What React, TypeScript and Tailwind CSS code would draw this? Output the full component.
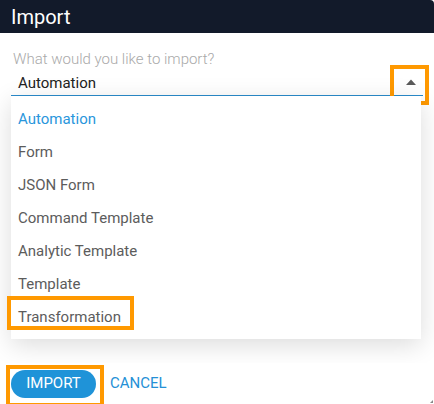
import React from "react";

const options = [
  "Automation",
  "Form",
  "JSON Form",
  "Command Template",
  "Analytic Template",
  "Template",
  "Transformation",
];

export default function App() {
  const selected = "Automation";

  return (
    <div
      className="relative flex h-[404px] w-[434px] flex-col overflow-hidden bg-white"
      style={{ fontFamily: "Roboto, 'Liberation Sans', sans-serif" }}
    >
      {/* Header */}
      <div className="flex h-[33px] shrink-0 items-center rounded-tr-[4px] bg-[#121a2a] px-[11px]">
        <h1 className="text-[20px] leading-none text-white">Import</h1>
      </div>

      {/* Body */}
      <div className="relative flex-1 px-[11px] pt-[16px]">
        <label className="block h-[20px] pl-[2px] text-[15px] leading-[20px] font-light text-[#a9a9a9]">
          What would you like to import?
        </label>

        <div className="relative flex h-[27px] items-center justify-between border-b border-[#2a8bcb] pt-[2px] pl-[7px] pr-[7px]">
          <span className="text-[15px] text-[#222]">{selected}</span>
          <svg width="10" height="6" viewBox="0 0 10 6" className="mb-[2px]">
            <path d="M0 6 L5 0.5 L10 6 Z" fill="#5a5a5a" />
          </svg>
          {/* highlight box */}
          <div className="absolute top-[-4px] right-[-6px] h-[40px] w-[39px] border-[4px] border-[#ff9900]" />
        </div>

        {/* Dropdown menu */}
        <div className="absolute top-[63px] left-[11px] right-[13px] z-0 bg-white py-[6px] shadow-[0_6px_24px_rgba(0,0,0,0.14)]">
          {options.map((opt) => (
            <div
              key={opt}
              className={`relative flex h-[33px] items-center px-[7px] pt-[1px] text-[15px] ${
                opt === selected ? "text-[#2a96dc]" : "text-[#5c5c5c]"
              }`}
            >
              {opt}
              {opt === "Transformation" && (
                <div className="absolute top-[-4px] left-[-4px] h-[34px] w-[127px] border-[4px] border-[#ff9900]" />
              )}
            </div>
          ))}
        </div>
      </div>

      {/* Footer */}
      <div className="relative z-10 flex h-[41px] shrink-0 items-center gap-[14px] bg-white px-[11px]">
        <button className="flex h-[28px] w-[85px] items-center justify-center rounded-full bg-[#1f93d8] text-[15px] text-white">
          IMPORT
        </button>
        <button className="text-[15px] text-[#2590d6]">CANCEL</button>
        <div className="absolute top-[2px] left-[6px] h-[42px] w-[98px] border-[4px] border-[#ff9900]" />
        <svg width="3" height="3" viewBox="0 0 3 3" className="absolute right-[1px] bottom-[1px]">
          <path d="M3 0 V3 H0 Z" fill="#888" />
        </svg>
      </div>
    </div>
  );
}
